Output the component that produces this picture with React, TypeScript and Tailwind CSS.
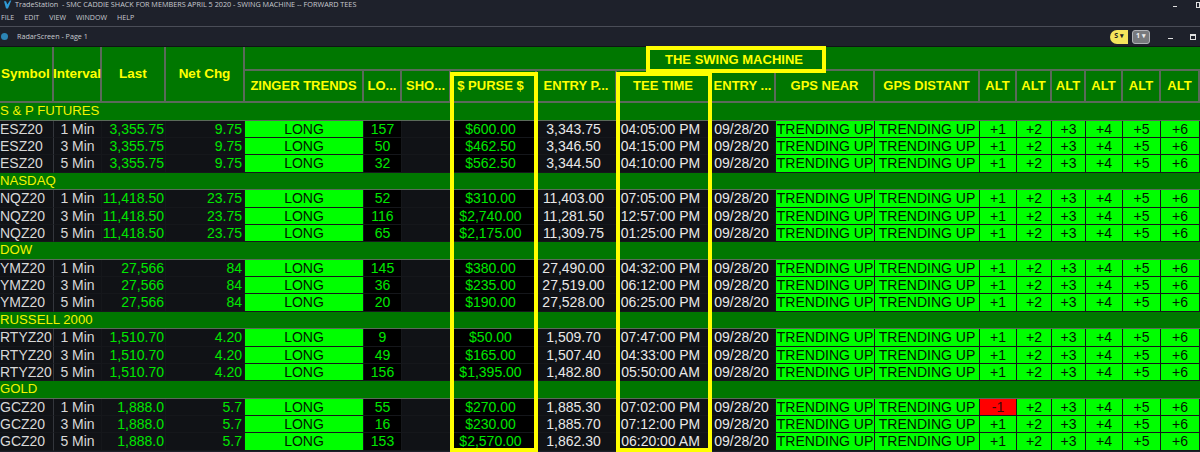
const gridCols =
  'grid grid-cols-[54px_48px_64px_79px_119px_38px_49px_86px_80px_94px_65px_99px_105px_37px_35px_34px_37px_38px_39px]'

interface Row {
  symbol: string
  interval: string
  last: string
  chg: string
  lo: string
  purse: string
  entry: string
  tee: string
}

interface Group {
  name: string
  rows: Row[]
}

const groups: Group[] = [
  {
    name: 'S & P FUTURES',
    rows: [
      { symbol: 'ESZ20', interval: '1 Min', last: '3,355.75', chg: '9.75', lo: '157', purse: '$600.00', entry: '3,343.75', tee: '04:05:00 PM' },
      { symbol: 'ESZ20', interval: '3 Min', last: '3,355.75', chg: '9.75', lo: '50', purse: '$462.50', entry: '3,346.50', tee: '04:15:00 PM' },
      { symbol: 'ESZ20', interval: '5 Min', last: '3,355.75', chg: '9.75', lo: '32', purse: '$562.50', entry: '3,344.50', tee: '04:10:00 PM' },
    ],
  },
  {
    name: 'NASDAQ',
    rows: [
      { symbol: 'NQZ20', interval: '1 Min', last: '11,418.50', chg: '23.75', lo: '52', purse: '$310.00', entry: '11,403.00', tee: '07:05:00 PM' },
      { symbol: 'NQZ20', interval: '3 Min', last: '11,418.50', chg: '23.75', lo: '116', purse: '$2,740.00', entry: '11,281.50', tee: '12:57:00 PM' },
      { symbol: 'NQZ20', interval: '5 Min', last: '11,418.50', chg: '23.75', lo: '65', purse: '$2,175.00', entry: '11,309.75', tee: '01:25:00 PM' },
    ],
  },
  {
    name: 'DOW',
    rows: [
      { symbol: 'YMZ20', interval: '1 Min', last: '27,566', chg: '84', lo: '145', purse: '$380.00', entry: '27,490.00', tee: '04:32:00 PM' },
      { symbol: 'YMZ20', interval: '3 Min', last: '27,566', chg: '84', lo: '36', purse: '$235.00', entry: '27,519.00', tee: '06:12:00 PM' },
      { symbol: 'YMZ20', interval: '5 Min', last: '27,566', chg: '84', lo: '20', purse: '$190.00', entry: '27,528.00', tee: '06:25:00 PM' },
    ],
  },
  {
    name: 'RUSSELL 2000',
    rows: [
      { symbol: 'RTYZ20', interval: '1 Min', last: '1,510.70', chg: '4.20', lo: '9', purse: '$50.00', entry: '1,509.70', tee: '07:47:00 PM' },
      { symbol: 'RTYZ20', interval: '3 Min', last: '1,510.70', chg: '4.20', lo: '49', purse: '$165.00', entry: '1,507.40', tee: '04:33:00 PM' },
      { symbol: 'RTYZ20', interval: '5 Min', last: '1,510.70', chg: '4.20', lo: '156', purse: '$1,395.00', entry: '1,482.80', tee: '05:50:00 AM' },
    ],
  },
  {
    name: 'GOLD',
    rows: [
      { symbol: 'GCZ20', interval: '1 Min', last: '1,888.0', chg: '5.7', lo: '55', purse: '$270.00', entry: '1,885.30', tee: '07:02:00 PM' },
      { symbol: 'GCZ20', interval: '3 Min', last: '1,888.0', chg: '5.7', lo: '16', purse: '$230.00', entry: '1,885.70', tee: '07:12:00 PM' },
      { symbol: 'GCZ20', interval: '5 Min', last: '1,888.0', chg: '5.7', lo: '153', purse: '$2,570.00', entry: '1,862.30', tee: '06:20:00 AM' },
    ],
  },
]

const headers = ['ZINGER TRENDS', 'LO...', 'SHO...', '$ PURSE $', 'ENTRY P...', 'TEE TIME', 'ENTRY ...', 'GPS NEAR', 'GPS DISTANT', 'ALT', 'ALT', 'ALT', 'ALT', 'ALT', 'ALT']

function Cell({ children, className = '' }: { children?: React.ReactNode; className?: string }) {
  return <div className={`flex items-center overflow-hidden whitespace-nowrap border-r border-b border-[#15171b] ${className}`}>{children}</div>
}

function DataRow({ row }: { row: Row }) {
  const dark = 'bg-[#101216]'
  const green = 'justify-center bg-[#00ff00] text-[#001800] border-[#0b8a0b]'
  return (
    <div className={`${gridCols} h-[17.25px] text-[14px] leading-none`}>
      <Cell className={`${dark} text-[#d8d8d8] border-r-[#33363c]`}>{row.symbol}</Cell>
      <Cell className={`${dark} justify-center text-[#d8d8d8]`}>{row.interval}</Cell>
      <Cell className={`${dark} justify-end pr-[1px] text-[#00e600]`}>{row.last}</Cell>
      <Cell className={`${dark} justify-end pr-[2px] text-[#00e600]`}>{row.chg}</Cell>
      <Cell className={green}>LONG</Cell>
      <Cell className="justify-center bg-black text-[#00e600]">{row.lo}</Cell>
      <Cell className={dark} />
      <Cell className="justify-center bg-black pr-[6px] text-[#00e600]">{row.purse}</Cell>
      <Cell className={`${dark} justify-center pr-[6px] text-[#e8e8e8]`}>{row.entry}</Cell>
      <Cell className={`${dark} justify-center pr-[6px] text-[#e8e8e8]`}>{row.tee}</Cell>
      <Cell className={`${dark} justify-center pr-[3px] text-[#e8e8e8]`}>09/28/20</Cell>
      <Cell className={green}>TRENDING UP</Cell>
      <Cell className={green}>TRENDING UP</Cell>
      {[1, 2, 3, 4, 5, 6].map((n) =>
        n === 1 && row.symbol === 'GCZ20' && row.interval === '1 Min' ? (
          <Cell key={n} className="justify-center bg-[#ff0000] text-[#3a0a0a] border-[#0b8a0b]">-1</Cell>
        ) : (
          <Cell key={n} className={green}>+{n}</Cell>
        ),
      )}
    </div>
  )
}

export default function App() {
  return (
    <div className="relative h-[452px] w-[1200px] overflow-hidden bg-[#1e212b] font-['Liberation_Sans',sans-serif]">
      {/* Title bar */}
      <div className="flex h-[9px] items-center font-['Open_Sans',sans-serif] text-[7.25px] text-[#c8cad0]">
        <svg viewBox="0 0 12 12" className="ml-[4px] h-[9px] w-[8px]">
          <path d="M0 1 L3 1 L5 6 L9 0 L11 0 L6 12 L3 12 Z" fill="#2f9ad6" />
        </svg>
        <span className="ml-[3px] whitespace-pre">TradeStation  - SMC CADDIE SHACK FOR MEMBERS APRIL 5 2020 - SWING MACHINE -- FORWARD TEES</span>
        <span className="ml-auto mt-[3px] h-[1px] w-[4px] bg-[#e0e0e0]" />
        <span className="ml-[19px] h-[6px] w-[4px] border border-[#e0e0e0]" />
      </div>
      {/* Menu */}
      <div className="flex h-[18px] items-center gap-[10px] border-b border-[#4a4d57] pl-[1px] font-['Open_Sans',sans-serif] text-[7.1px] text-[#c8cad0]">
        <span>FILE</span><span>EDIT</span><span>VIEW</span><span>WINDOW</span><span>HELP</span>
      </div>
      {/* Window tab */}
      <div className="flex h-[20px] items-center border-b border-[#101216] font-['Open_Sans',sans-serif] text-[7.2px] text-[#c8cad0]">
        <span className="ml-[1px] h-[7px] w-[7px] rounded-full bg-[#2c84b4]" />
        <span className="ml-[9px]">RadarScreen - Page 1</span>
        <div className="ml-auto flex items-center">
          <span className="flex h-[14px] w-[18px] items-center justify-center rounded-l-full rounded-r-[3px] bg-[#f4e45c] text-[7px] font-bold text-[#222]">S ▾</span>
          <span className="ml-[4px] flex h-[14px] w-[18px] items-center justify-center rounded-[3px] border border-[#b0b2b6] bg-[#77797d] text-[7px] font-bold text-[#eee]">1 ▾</span>
          <span className="ml-[18px] mt-[3px] h-[1px] w-[5px] bg-[#e0e0e0]" />
          <span className="ml-[17px] h-[6px] w-[6px] border border-t-2 border-[#e0e0e0]" />
          <span className="ml-[1px] w-[3px]" />
        </div>
      </div>

      {/* Table header */}
      <div className="bg-[#007700] font-bold text-[#ffff00]">
        <div className="flex h-[56px] border-b-2 border-[#5a6a5a] text-[13.5px]">
          <div className="flex w-[54px] items-center border-r-2 border-[#5a6a5a] pl-[1px]">Symbol</div>
          <div className="flex w-[48px] items-center justify-center border-r-2 border-[#5a6a5a]">Interval</div>
          <div className="flex w-[64px] items-center justify-center border-r-2 border-[#5a6a5a]">Last</div>
          <div className="flex w-[79px] items-center justify-center border-r-2 border-[#5a6a5a]">Net Chg</div>
          <div className="flex flex-1 flex-col">
            <div className="h-[24px] border-b-2 border-[#5a6a5a]" />
            <div className="grid flex-1 grid-cols-[119px_38px_49px_86px_80px_94px_65px_99px_105px_37px_35px_34px_37px_38px_39px] text-[13px]">
              {headers.map((h, i) => (
                <div key={i} className={`flex items-center justify-center overflow-hidden whitespace-nowrap border-r-2 border-[#5a6a5a] ${h === '$ PURSE $' ? 'pr-[5px]' : ''}`}>{h}</div>
              ))}
            </div>
          </div>
        </div>
      </div>

      {/* Rows */}
      {groups.map((g) => (
        <div key={g.name}>
          <div className="flex h-[17.75px] items-center border-b border-[#5a6a5a] bg-[#007700] text-[13.2px] text-[#f4f400]">{g.name}</div>
          {g.rows.map((r, i) => (
            <DataRow key={i} row={r} />
          ))}
        </div>
      ))}

      {/* Yellow callouts */}
      <div className="absolute left-[646px] top-[46px] flex h-[27px] w-[180px] items-center justify-center border-[4px] border-[#ffff00] bg-[#007700] pr-[4px] text-[13px] font-bold text-[#ffff00]">THE SWING MACHINE</div>
      <div className="absolute left-[450px] top-[72px] h-[380px] w-[88px] border-[4px] border-[#ffff00]" />
      <div className="absolute left-[616px] top-[72px] h-[380px] w-[96px] border-[4px] border-[#ffff00]" />
    </div>
  )
}
